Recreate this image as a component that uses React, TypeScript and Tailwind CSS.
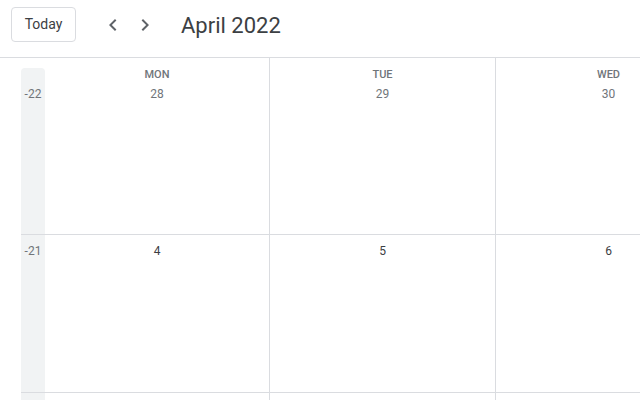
import React from "react";

type Week = { wk: string; days: { n: string; cur: boolean }[] };

const weeks: Week[] = [
  { wk: "-22", days: [{ n: "28", cur: false }, { n: "29", cur: false }, { n: "30", cur: false }] },
  { wk: "-21", days: [{ n: "4", cur: true }, { n: "5", cur: true }, { n: "6", cur: true }] },
  { wk: "", days: [{ n: "", cur: true }, { n: "", cur: true }, { n: "", cur: true }] },
];

const dayNames = ["MON", "TUE", "WED"];
const widths = ["w-[225px]", "w-[226px]", "w-[226px]"];

function ChevronLeft() {
  return (
    <svg width="24" height="24" viewBox="0 0 24 24" className="block">
      <path d="M15.41 7.41L14 6l-6 6 6 6 1.41-1.41L10.83 12z" fill="#5f6368" />
    </svg>
  );
}

function ChevronRight() {
  return (
    <svg width="24" height="24" viewBox="0 0 24 24" className="block">
      <path d="M10 6L8.59 7.41 13.17 12l-4.58 4.59L10 18l6-6z" fill="#5f6368" />
    </svg>
  );
}

export default function App() {
  return (
    <div className="w-[640px] h-[400px] overflow-hidden bg-white font-['Roboto',sans-serif]">
      <header className="h-[58px] border-b border-[#dadce0] flex items-start">
        <button className="ml-[11px] mt-[7px] w-[65px] h-[35px] border border-[#dadce0] rounded-[4px] text-[14px] font-normal text-[#3c4043] flex items-center justify-center">
          Today
        </button>
        <div className="ml-[25px] mt-[13px]">
          <ChevronLeft />
        </div>
        <div className="ml-[8px] mt-[13px]">
          <ChevronRight />
        </div>
        <div className="ml-[24px] mt-[12px] text-[22px] leading-[28px] text-[#3c4043] whitespace-nowrap">
          April 2022
        </div>
      </header>
      <div className="pl-[21px] flex flex-col">
        {weeks.map((w, wi) => (
          <div
            key={wi}
            className={`flex shrink-0 border-b border-[#dadce0] ${wi === 0 ? "h-[177px]" : "h-[158px]"}`}
          >
            {wi === 0 ? (
              <div className="w-[24px] shrink-0 flex flex-col pt-[10px]">
                <div className="flex-1 bg-[#f1f3f4] rounded-t-[4px] pt-[16px] text-center text-[12px] leading-[20px] text-[#70757a]">
                  {w.wk}
                </div>
              </div>
            ) : (
              <div className="w-[24px] shrink-0 bg-[#f1f3f4] pt-[6px] text-center text-[12px] leading-[20px] text-[#70757a]">
                {w.wk}
              </div>
            )}
            {w.days.map((d, di) => (
              <div
                key={di}
                className={`${widths[di]} shrink-0 border-r border-[#dadce0] flex flex-col items-center ${wi === 0 ? "pt-[9px]" : "pt-[6px]"}`}
              >
                {wi === 0 && (
                  <div className="text-[11px] leading-[16px] font-medium text-[#70757a] mb-[1px]">
                    {dayNames[di]}
                  </div>
                )}
                {d.n && (
                  <div
                    className={`text-[12px] leading-[20px] ${d.cur ? "text-[#3c4043]" : "text-[#70757a]"}`}
                  >
                    {d.n}
                  </div>
                )}
              </div>
            ))}
          </div>
        ))}
      </div>
    </div>
  );
}
